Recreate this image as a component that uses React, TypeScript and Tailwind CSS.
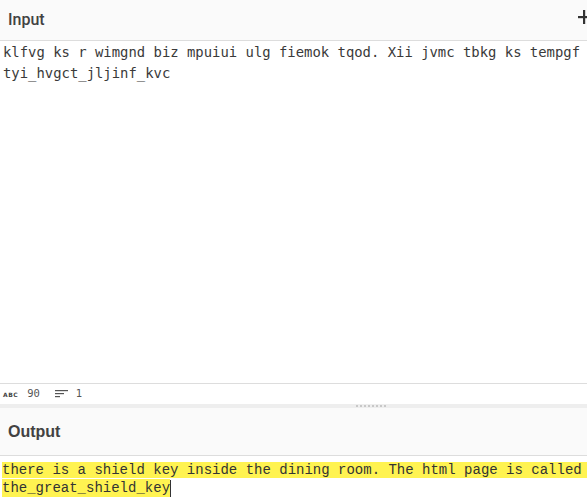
import React from "react";

export default function App() {
  return (
    <div className="w-[587px] h-[503px] overflow-hidden bg-white flex flex-col text-[#424242]">
      {/* Input header */}
      <div className="h-[41px] shrink-0 bg-[#fafafa] border-b border-[#dddddd] flex items-center justify-between relative">
        <span className="pl-2 text-[16px] font-medium font-['Roboto',sans-serif] text-[#424242]">Input</span>
        <svg className="absolute left-[576px] top-[10px]" width="14" height="14" viewBox="0 0 14 14">
          <rect x="7" y="0" width="2.2" height="14" fill="#333" />
          <rect x="2" y="6" width="12" height="2.2" fill="#333" />
        </svg>
      </div>
      {/* Input text */}
      <div className="h-[342px] shrink-0 pl-[3px] pt-[1px] font-['DejaVu_Sans_Mono',monospace] text-[13.9px] leading-[21px] text-[#3a3a3a] whitespace-pre">
        <div>klfvg ks r wimgnd biz mpuiui ulg fiemok tqod. Xii jvmc tbkg ks tempgf</div>
        <div>tyi_hvgct_jljinf_kvc</div>
      </div>
      {/* Status bar */}
      <div className="h-[21px] shrink-0 border-t border-[#dddddd] bg-white flex items-center font-['DejaVu_Sans_Mono',monospace] text-[10.5px] text-[#555]">
        <span className="ml-[3px] text-[6px] font-bold tracking-[0.5px] font-['DejaVu_Sans',sans-serif] text-[#444]">ABC</span>
        <span className="ml-[9px]">90</span>
        <svg className="ml-[15px]" width="13" height="10" viewBox="0 0 13 10">
          <rect x="0" y="1" width="13" height="1.2" fill="#555" />
          <rect x="0" y="4" width="9" height="1.2" fill="#555" />
          <rect x="0" y="7" width="5" height="1.2" fill="#555" />
        </svg>
        <span className="ml-[8px]">1</span>
      </div>
      {/* Divider */}
      <div className="h-[4px] shrink-0 bg-[#eeeeee] flex items-start">
        <div className="flex gap-[2px] ml-[356px] mt-[1px]">
          {Array.from({ length: 8 }).map((_, i) => (
            <div key={i} className="w-[2px] h-[2px] bg-[#c8c8c8]" />
          ))}
        </div>
      </div>
      {/* Output header */}
      <div className="h-[48px] shrink-0 bg-[#fafafa] border-b border-[#dddddd] flex items-center">
        <span className="pl-2 text-[16px] font-bold font-['Liberation_Sans',sans-serif] text-[#424242]">Output</span>
      </div>
      {/* Output text */}
      <div className="flex-1 pl-[2px] pt-[5px] font-['Liberation_Mono',monospace] text-[14px] leading-[18px] text-[#333] whitespace-pre">
        <div><span className="bg-[#fff351]">there is a shield key inside the dining room. The html page is called </span></div>
        <div className="flex items-center"><span className="bg-[#fff351]">the_great_shield_key</span><span className="w-[1px] h-[17px] bg-[#333]" /></div>
      </div>
    </div>
  );
}
